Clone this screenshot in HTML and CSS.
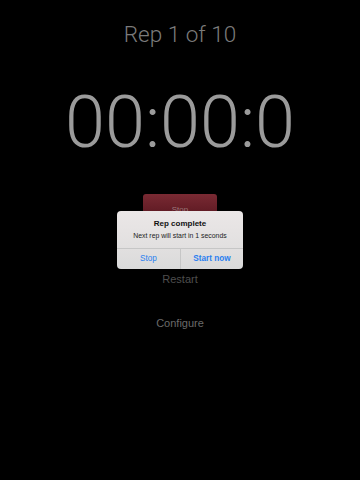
FILE: index.html
```html
<!DOCTYPE html>
<html>
<head>
<meta charset="utf-8">
<link rel="stylesheet" href="styles.css">
</head>
<body>
<div class="screen">
  <div class="rep">Rep 1 of 10</div>
  <div class="timer">00:00:0</div>
  <div class="stop-btn">Stop</div>
  <div class="link restart">Restart</div>
  <div class="link configure">Configure</div>
</div>
<div class="alert">
  <div class="alert-body">
    <div class="alert-title">Rep complete</div>
    <div class="alert-msg">Next rep will start in 1 seconds</div>
  </div>
  <div class="alert-buttons">
    <div class="alert-btn">Stop</div>
    <div class="alert-btn primary">Start now</div>
  </div>
</div>
</body>
</html>
```
FILE: styles.css
```css
html, body {
  margin: 0;
  padding: 0;
  background: #000;
}
body {
  width: 360px;
  height: 480px;
  overflow: hidden;
  position: relative;
  font-family: "Liberation Sans", Arial, sans-serif;
}
.screen {
  display: flex;
  flex-direction: column;
  align-items: center;
}
.rep {
  margin-top: 20px;
  font-family: Roboto, "Liberation Sans", sans-serif;
  font-weight: 300;
  font-size: 22.5px;
  line-height: 28px;
  color: #7b7b7b;
}
.timer {
  margin-top: 33px;
  font-family: Roboto, "Liberation Sans", sans-serif;
  font-weight: 300;
  font-size: 72px;
  line-height: 84px;
  color: #9b9b9b;
}
.stop-btn {
  margin-top: 29px;
  width: 74px;
  height: 21px;
  border-radius: 3px;
  background: linear-gradient(#7a2a33, #5c1922);
  color: #9a777b;
  font-size: 8px;
  line-height: 32px;
  text-align: center;
}
.link {
  font-size: 11px;
  line-height: 14px;
}
.restart {
  margin-top: 57px;
  color: #4e4e4e;
}
.configure {
  margin-top: 30px;
  color: #6a6a6a;
}
.alert {
  position: absolute;
  left: 117px;
  top: 211px;
  width: 126px;
  height: 58px;
  border-radius: 4px;
  overflow: hidden;
  background: linear-gradient(#ebe7e7, #e2e0e0 60%, #dadada);
  display: flex;
  flex-direction: column;
}
.alert-body {
  height: 37px;
  padding-top: 7px;
  box-sizing: border-box;
  display: flex;
  flex-direction: column;
  align-items: center;
}
.alert-title {
  font-size: 8px;
  font-weight: bold;
  line-height: 11px;
  color: #111;
}
.alert-msg {
  margin-top: 2px;
  font-size: 6.9px;
  line-height: 9px;
  color: #222;
}
.alert-buttons {
  flex: 1;
  display: grid;
  grid-template-columns: 1fr 1fr;
  border-top: 1px solid #c6c6c6;
}
.alert-btn {
  font-size: 8.2px;
  line-height: 20px;
  text-align: center;
  color: #2a7ff0;
}
.alert-btn.primary {
  font-weight: bold;
  border-left: 1px solid #c6c6c6;
}
```
